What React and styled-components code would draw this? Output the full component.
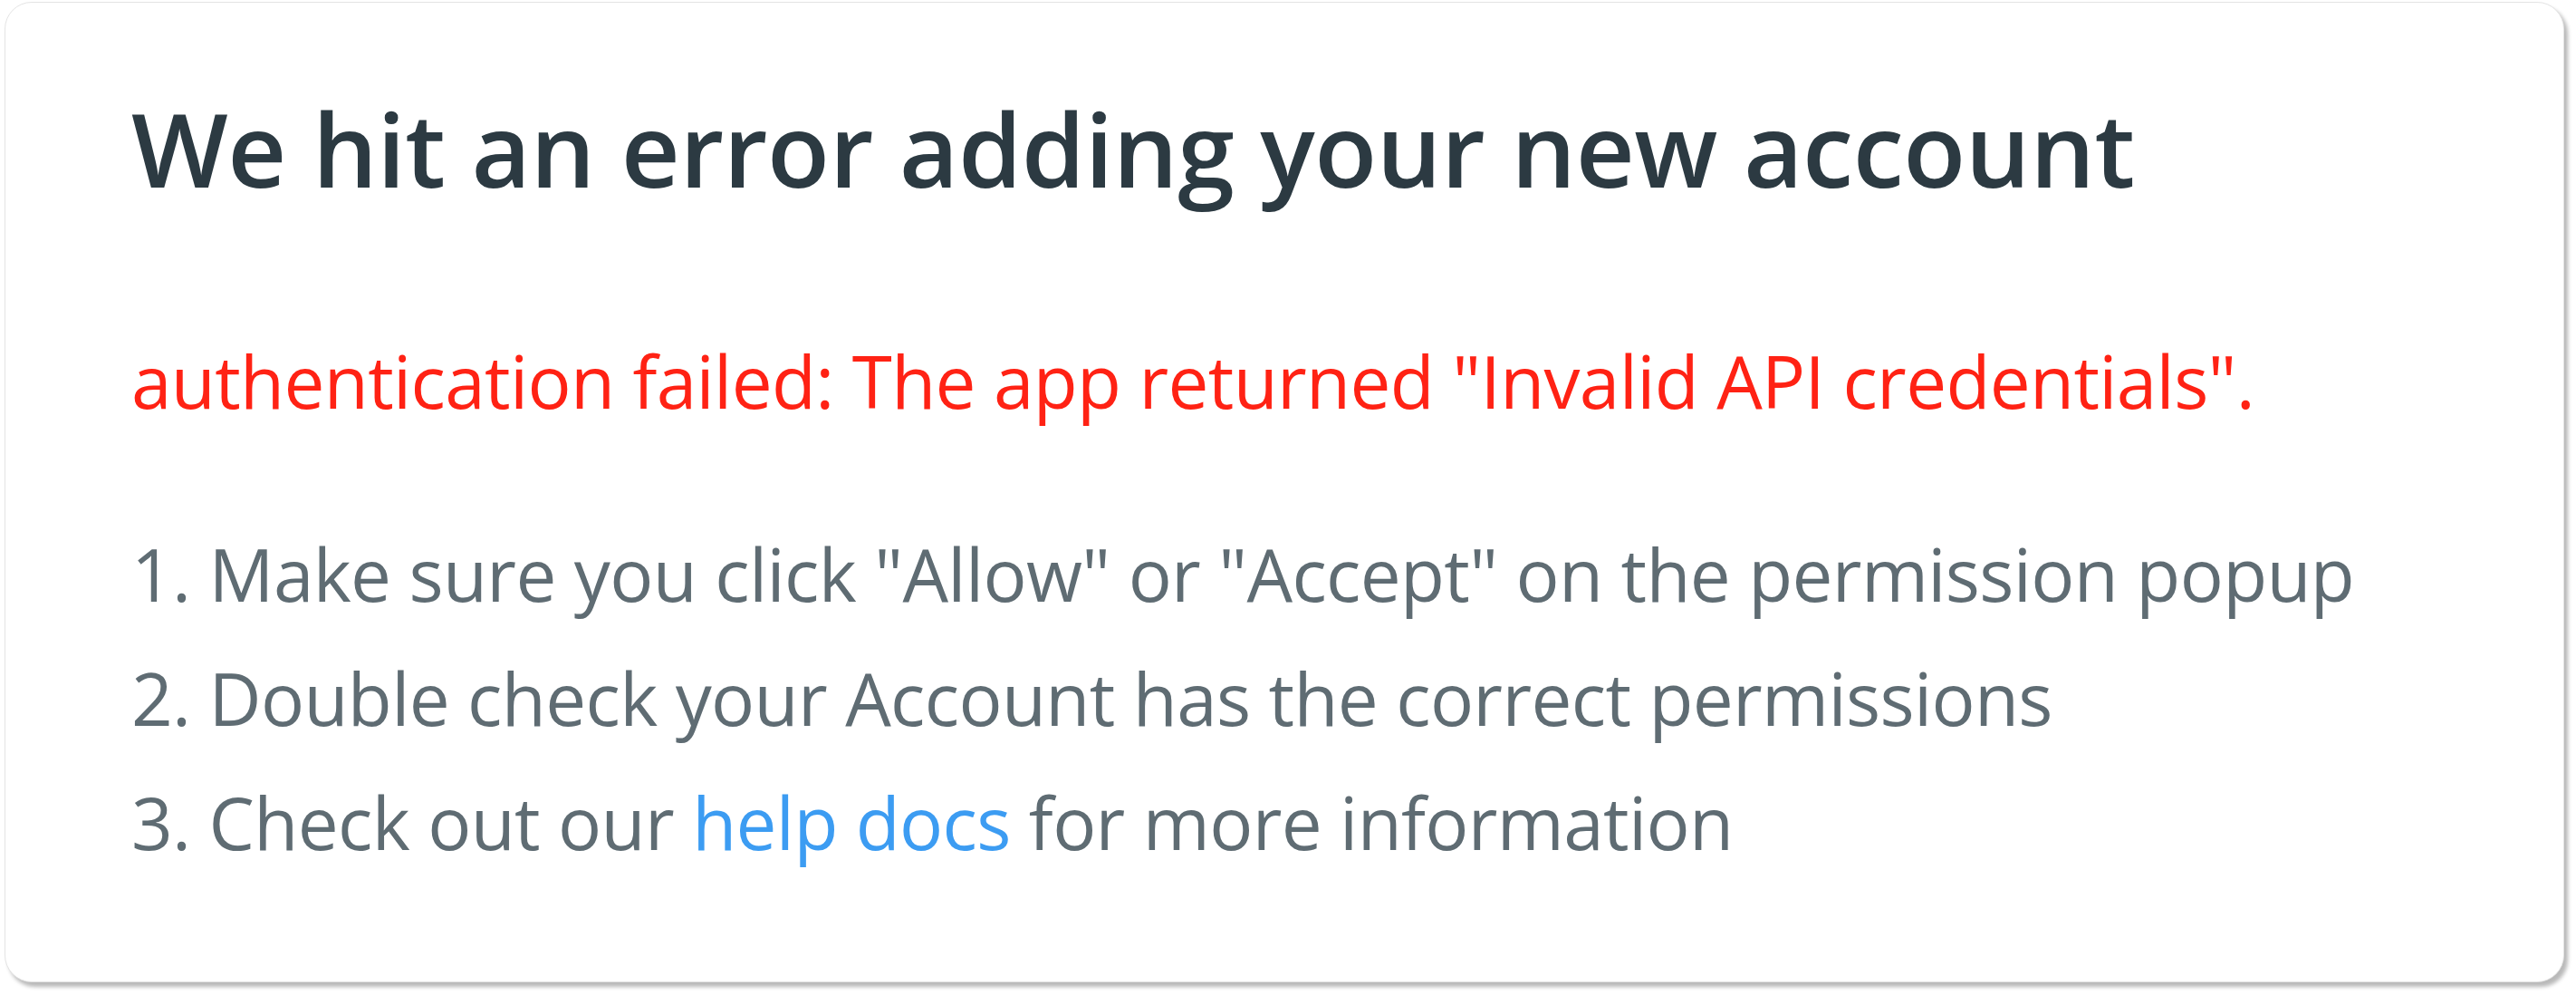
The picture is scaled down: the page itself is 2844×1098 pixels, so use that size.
import styled, { createGlobalStyle } from "styled-components";

const Global = createGlobalStyle`
  html, body {
    margin: 0;
    padding: 0;
    background: #ffffff;
  }
  body {
    font-family: "Open Sans", "Noto Sans", sans-serif;
  }
`;

const Page = styled.div`
  box-sizing: border-box;
  width: 2844px;
  height: 1098px;
  padding: 2px 13px 14px 5px;
`;

const Card = styled.div`
  box-sizing: border-box;
  height: 100%;
  padding: 93px 120px 0 139px;
  background: #ffffff;
  border: 1px solid #e4e4e4;
  border-radius: 30px;
  box-shadow: 4px 5px 4px rgba(0, 0, 0, 0.28);
`;

const Title = styled.h1`
  margin: 0;
  font-size: 113px;
  line-height: 135.6px;
  font-weight: 600;
  letter-spacing: -0.45px;
  color: #2c3a42;
  white-space: nowrap;
`;

const ErrorText = styled.p`
  margin: 132px 0 0;
  font-size: 80px;
  line-height: 112px;
  letter-spacing: -0.65px;
  color: #ff2214;
  white-space: nowrap;
`;

const Steps = styled.ol`
  margin: 88px 0 0;
  padding: 0;
  list-style: none;
`;

const Step = styled.li`
  font-size: 80px;
  line-height: 137px;
  letter-spacing: -0.65px;
  color: #5f6c73;
  white-space: nowrap;
`;

const HelpLink = styled.a`
  color: #3c9cf2;
  text-decoration: none;
`;

export default function App() {
  return (
    <>
      <Global />
      <Page>
        <Card>
          <Title>We hit an error adding your new account</Title>
          <ErrorText>
            authentication failed: The app returned "Invalid API credentials".
          </ErrorText>
          <Steps>
            <Step>1. Make sure you click "Allow" or "Accept" on the permission popup</Step>
            <Step>2. Double check your Account has the correct permissions</Step>
            <Step>
              3. Check out our <HelpLink href="#">help docs</HelpLink> for more information
            </Step>
          </Steps>
        </Card>
      </Page>
    </>
  );
}
